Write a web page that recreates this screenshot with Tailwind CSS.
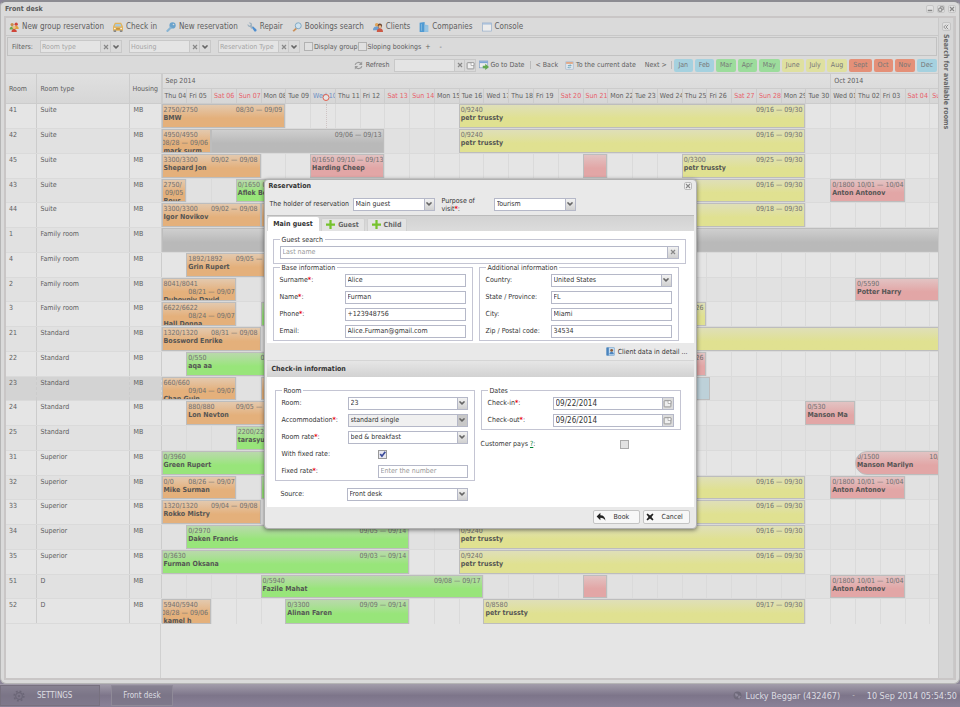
<!DOCTYPE html>
<html lang="en">
<head>
    <meta charset="UTF-8">
    <title>Front desk</title>
    <script src="https://cdn.jsdelivr.net/npm/@tailwindcss/browser@4"></script>
</head>
<body class="relative flex min-h-screen flex-col overflow-x-hidden bg-[#8d8799] font-['DejaVu_Sans_Condensed','DejaVu_Sans',sans-serif] text-[7px] leading-[8px] text-[#606060]">

    <!-- Icon set -->
    <svg class="hidden">
        <symbol id="i-group" viewBox="0 0 16 16"><circle cx="5" cy="4" r="2.6" fill="#c98b4a"/><circle cx="11.5" cy="3.5" r="2.6" fill="#d0453a"/><path d="M1 12c0-4 2-5 4-5s4 1 4 5z" fill="#6aa84f"/><path d="M8 11c0-4 2-5 3.500-5s4 1 4 5z" fill="#e0a23c"/><circle cx="8" cy="8.500" r="2.500" fill="#f0c089"/><path d="M4 16c0-4 2-5 4-5s4.500 1 4.500 5z" fill="#cf4538"/></symbol>
        <symbol id="i-taxi" viewBox="0 0 16 16"><path d="M3 1h10l3 6v7H0V7z" fill="#e3b35a"/><path d="M4 3h8l1.500 4h-11z" fill="#a9c9dc"/><path d="M1 13h4v3H1zM11 13h4v3h-4z" fill="#888"/><path d="M5 10h6v2H5z" fill="#b98a3c"/><circle cx="3" cy="10.500" r="1.200" fill="#fff"/><circle cx="13" cy="10.500" r="1.200" fill="#fff"/></symbol>
        <symbol id="i-key" viewBox="0 0 16 16"><circle cx="10.500" cy="5.500" r="5" fill="#6aa3cc"/><circle cx="12" cy="4" r="1.300" fill="#dcdcdc"/><path d="M7 7l2.500 2.500L3 16H1v-3z" fill="#8ab5d3"/></symbol>
        <symbol id="i-wrench" viewBox="0 0 16 16"><path d="M1 3l3 3 2-2-3-3c3-1 6 1 5 5l2 2-3 3-2-3C3 8 0 6 1 3z" fill="#9fb2c0"/><path d="M8 9l2-2 5 5c1 2-1 4-3 3z" fill="#4f8fd0"/></symbol>
        <symbol id="i-search" viewBox="0 0 16 16"><path d="M6 9l2 2-5 4.500L.8 14z" fill="#c98f58"/><circle cx="10" cy="6" r="4.800" fill="#cfe2ee" stroke="#7ea6c2" stroke-width="1.500"/></symbol>
        <symbol id="i-clients" viewBox="0 0 16 16"><circle cx="6" cy="4.500" r="3" fill="#e2a55a"/><path d="M0 13c0-5 3-6 6-6s5 1 5 6z" fill="#6f9fd0"/><circle cx="11" cy="6" r="3.500" fill="#6b4530"/><circle cx="11" cy="7.500" r="2.300" fill="#efbd8b"/><path d="M6 16c0-4 2-6 5-6s5 2 5 6z" fill="#cc5a46"/></symbol>
        <symbol id="i-company" viewBox="0 0 16 16"><path d="M1 1l8-1v16H1z" fill="#4f9ad2"/><path d="M9 4l6 1v11H9z" fill="#8fc0e2"/><path d="M4 3v11M11 7v7M13 7v7" stroke="#a9cfe9" stroke-width=".8"/></symbol>
        <symbol id="i-window" viewBox="0 0 16 16"><rect x="1" y="1.500" width="14" height="13" fill="#ececec" stroke="#8fa9c9"/><path d="M1 2h14v2H1z" fill="#9db8d9"/></symbol>
        <symbol id="i-refresh" viewBox="0 0 16 16"><path d="M2 7c1-5 8-6 11-2M14 9c-1 5-8 6-11 2" fill="none" stroke="#9a9a9a" stroke-width="2"/><path d="M14.500 1v6h-6zM1.500 15V9h6z" fill="#9a9a9a"/></symbol>
        <symbol id="i-goto" viewBox="0 0 16 16"><rect x="1" y="1.500" width="13" height="11" fill="#ececec" stroke="#7b9dc4"/><path d="M1 2h13v3H1z" fill="#7fa5d4"/><path d="M6 9h4V6l6 5-6 5v-3H6z" fill="#62a94f"/></symbol>
        <symbol id="i-today" viewBox="0 0 16 16"><rect x="1.500" y="1.500" width="13" height="13" fill="#e4e9ef" stroke="#9ab0c8"/><path d="M2 2h12v3H2z" fill="#e0a07a"/><path d="M5 8h6l-2-2M11 11H5l2 2" fill="none" stroke="#5b9ab0" stroke-width="1.300"/></symbol>
        <symbol id="i-cal" viewBox="0 0 16 16"><rect x="2" y="3" width="12" height="11" rx="1" fill="#efefef" stroke="#888" stroke-width="1.500"/><path d="M9 3h5v5H9z" fill="#fff" stroke="#888"/></symbol>
        <symbol id="i-down" viewBox="0 0 8 8"><path d="M1.200 2.200h1.300L4 3.800l1.500-1.600h1.300v1L4 6 1.200 3.200z" fill="#666"/></symbol>
        <symbol id="i-x" viewBox="0 0 8 8"><path d="M2 2l4 4M6 2L2 6" stroke="#888" stroke-width="1.200"/></symbol>
        <symbol id="i-plus" viewBox="0 0 8 8"><path d="M3 0h2v3h3v2H5v3H3V5H0V3h3z" fill="#76c22e"/></symbol>
        <symbol id="i-check" viewBox="0 0 8 8"><path d="M2 3.500l1.500 2L6.500 1.500" fill="none" stroke="#3a4a9a" stroke-width="1.500"/></symbol>
        <symbol id="i-card" viewBox="0 0 16 16"><rect x="1" y="1" width="14" height="14" rx="1" fill="#c5dcf0" stroke="#6a9bc9"/><path d="M1 1h4v14H1z" fill="#4b83bd"/><circle cx="10" cy="6" r="2.500" fill="#8a5a36"/><path d="M6 13c0-3 2-4 4-4s4 1 4 4z" fill="#4b83bd"/></symbol>
        <symbol id="i-back" viewBox="0 0 16 16"><path d="M7 1v4c5 0 8 3 8 9-2-4-4-5-8-5v4L1 7z" fill="#222"/></symbol>
        <symbol id="i-cancel" viewBox="0 0 16 16"><path d="M1 3l2-2 5 4 5-4 2 2-4 5 4 5-2 2-5-4-5 4-2-2 4-5z" fill="#222"/></symbol>
        <symbol id="i-gear" viewBox="0 0 16 16"><circle cx="8" cy="8" r="4.500" fill="none" stroke="#6b6677" stroke-width="1.500"/><circle cx="8" cy="8" r="6.500" fill="none" stroke="#6b6677" stroke-width="2" stroke-dasharray="2.500 2.600"/><circle cx="8" cy="8" r="1.500" fill="#6b6677"/></symbol>
        <symbol id="i-globe" viewBox="0 0 16 16"><circle cx="8" cy="8" r="7" fill="#6f6a7b"/><path d="M3 4l5 1 1 4-4 1zM10 8l4 1-3 5-2-2z" fill="#8f899b"/></symbol>
    </svg>

    <!-- Main window -->
    <main class="flex flex-1 flex-col rounded-md border border-t-2 border-[#b5b5b5] border-t-[#8c8c92] bg-[#dadada] px-[3px] pb-[3px]">
        <header class="flex h-[14px] items-center justify-between pl-px">
            <h1 class="text-[7px] font-bold text-[#5c5c5c]">Front desk</h1>
            <div class="flex gap-[3px]">
                <button aria-label="Minimize" class="flex size-2 items-center justify-center rounded-xs border border-[#c6c6c6] bg-[#e2e2e2]"><svg class="size-[6px] shrink-0" viewBox="0 0 8 8"><path d="M1 6h6" stroke="#888" stroke-width="2"/></svg></button>
                <button aria-label="Restore" class="flex size-2 items-center justify-center rounded-xs border border-[#c6c6c6] bg-[#e2e2e2]"><svg class="size-[6px] shrink-0" viewBox="0 0 8 8"><path d="M3 3V1h4v4H5M1 3h4v4H1z" fill="none" stroke="#888" stroke-width="1.300"/></svg></button>
                <button aria-label="Close" class="flex size-2 items-center justify-center rounded-xs border border-[#c6c6c6] bg-[#e2e2e2]"><svg class="size-2 shrink-0"><use href="#i-x"/></svg></button>
            </div>
        </header>

        <div class="flex flex-1 border-2 border-[#c9c6c6] bg-[#dadada]">
            <div class="flex min-w-0 flex-1 flex-col">
                <!-- Main toolbar -->
                <nav class="flex h-[18px] items-center gap-[9px] border-b border-[#c8c8c8] pt-px pl-[3px] text-[8px] text-[#606060]">
                    <button class="flex items-center gap-[3px]"><svg class="size-[10px]"><use href="#i-group"/></svg>New group reservation</button>
                    <button class="flex items-center gap-[3px]"><svg class="size-[10px]"><use href="#i-taxi"/></svg>Check in</button>
                    <button class="flex items-center gap-[3px]"><svg class="size-[10px]"><use href="#i-key"/></svg>New reservation</button>
                    <button class="flex items-center gap-[3px]"><svg class="size-[10px]"><use href="#i-wrench"/></svg>Repair</button>
                    <button class="flex items-center gap-[3px]"><svg class="size-[10px]"><use href="#i-search"/></svg>Bookings search</button>
                    <button class="flex items-center gap-[3px]"><svg class="size-[10px]"><use href="#i-clients"/></svg>Clients</button>
                    <button class="flex items-center gap-[3px]"><svg class="size-[10px]"><use href="#i-company"/></svg>Companies</button>
                    <button class="flex items-center gap-[3px]"><svg class="size-[10px]"><use href="#i-window"/></svg>Console</button>
                </nav>

                <!-- Filters -->
                <div class="mx-px mt-px flex h-[19px] items-center border border-[#c2c2c2] pl-1">
                    <span class="w-7">Filters:</span>
                    <div class="mr-[7px] flex h-[13px] w-[82px]">
                        <input aria-label="Room type" placeholder="Room type" class="w-[61px] border border-[#c8c8c8] bg-[#e4e4e4] px-px placeholder:text-[#a5a5a5]">
                        <button aria-label="Clear" class="flex w-[10px] items-center justify-center border border-l-0 border-[#c8c8c8]"><svg class="size-2"><use href="#i-x"/></svg></button>
                        <button aria-label="Open" class="flex w-[11px] items-center justify-center border border-l-0 border-[#c8c8c8]"><svg class="size-2"><use href="#i-down"/></svg></button>
                    </div>
                    <div class="mr-[7px] flex h-[13px] w-[82px]">
                        <input aria-label="Housing" placeholder="Housing" class="w-[61px] border border-[#c8c8c8] bg-[#e4e4e4] px-px placeholder:text-[#a5a5a5]">
                        <button aria-label="Clear" class="flex w-[10px] items-center justify-center border border-l-0 border-[#c8c8c8]"><svg class="size-2"><use href="#i-x"/></svg></button>
                        <button aria-label="Open" class="flex w-[11px] items-center justify-center border border-l-0 border-[#c8c8c8]"><svg class="size-2"><use href="#i-down"/></svg></button>
                    </div>
                    <div class="mr-1 flex h-[13px] w-[82px]">
                        <input aria-label="Reservation Type" placeholder="Reservation Type" class="w-[61px] border border-[#c8c8c8] bg-[#e4e4e4] px-px placeholder:text-[#a5a5a5]">
                        <button aria-label="Clear" class="flex w-[10px] items-center justify-center border border-l-0 border-[#c8c8c8]"><svg class="size-2"><use href="#i-x"/></svg></button>
                        <button aria-label="Open" class="flex w-[11px] items-center justify-center border border-l-0 border-[#c8c8c8]"><svg class="size-2"><use href="#i-down"/></svg></button>
                    </div>
                    <label class="flex items-center gap-px whitespace-nowrap"><input type="checkbox" class="size-[9px] shrink-0 appearance-none border border-[#b2b2b2] bg-[#e0e0e0]">Display group</label>
                    <label class="flex items-center gap-px whitespace-nowrap"><input type="checkbox" class="size-[9px] shrink-0 appearance-none border border-[#b2b2b2] bg-[#e0e0e0]">Sloping bookings</label>
                    <button class="ml-1">+</button>
                    <button class="ml-[9px]">-</button>
                </div>

                <!-- Date navigation -->
                <div class="flex h-[17px] items-center justify-end pt-px pr-px">
                    <button class="mr-[5px] flex items-center gap-[3px]"><svg class="size-[9px]"><use href="#i-refresh"/></svg>Refresh</button>
                    <div class="mr-[3px] flex h-[13px]">
                        <input aria-label="Date" class="w-[61px] border border-[#c8c8c8] bg-[#e4e4e4] px-px">
                        <button aria-label="Clear" class="flex w-[10px] items-center justify-center border border-l-0 border-[#c8c8c8]"><svg class="size-2"><use href="#i-x"/></svg></button>
                        <button aria-label="Pick date" class="flex w-[11px] items-center justify-center border border-l-0 border-[#c8c8c8]"><svg class="size-[9px]"><use href="#i-cal"/></svg></button>
                    </div>
                    <button class="flex items-center gap-px"><svg class="size-[10px]"><use href="#i-goto"/></svg>Go to Date</button>
                    <span class="mx-[5px] h-2 border-l border-[#bbb]"></span>
                    <button class="mr-[7px]">&lt; Back</button>
                    <button class="mr-[9px] flex items-center gap-[2px]"><svg class="size-[9px]"><use href="#i-today"/></svg>To the current date</button>
                    <button>Next &gt;</button>
                    <span class="mr-[2px] ml-1 h-2 border-l border-[#bbb]"></span>
                    <div id="months" class="flex gap-[2px]"></div>
                </div>

                <!-- Booking grid -->
                <table class="w-full table-fixed border-collapse">
                    <thead class="bg-linear-to-b from-[#e0e0e0] to-[#d6d6d6]">
                        <tr class="h-[29px]">
                            <th class="w-[30px] border border-l-0 border-[#cccccc] pl-[3px] text-left font-normal">Room</th>
                            <th class="w-[93px] border border-[#cccccc] pl-1 text-left font-normal">Room type</th>
                            <th class="w-8 border border-[#cccccc] pl-[3px] text-left font-normal">Housing</th>
                            <th class="relative overflow-hidden border border-r-0 border-[#cccccc] p-0 font-normal">
                                <div id="monthRow" class="relative h-[15px] border-b border-[#cccccc]"></div>
                                <div id="dayRow" class="relative h-[14px]"></div>
                            </th>
                        </tr>
                    </thead>
                    <tbody id="rooms"></tbody>
                </table>
                <div class="flex flex-1 bg-[#e5e5e5]"><div class="w-[155px] border-r border-[#d0d0d0]"></div></div>
            </div>

            <!-- Collapsed side panel -->
            <aside class="flex w-4 flex-col items-center border-x border-[#c9c9c9] bg-[#d6d6d6] pt-1">
                <button aria-label="Expand" class="mb-[3px] flex size-[9px] items-center justify-center rounded-xs border border-[#c4c4c4] bg-[#e0e0e0]"><svg class="size-[6px]" viewBox="0 0 8 8"><path d="M4 1L1 4l3 3M7 1L4 4l3 3" fill="none" stroke="#777"/></svg></button>
                <span class="text-[7px] font-bold whitespace-nowrap text-[#666] [writing-mode:vertical-rl]">Search for available rooms</span>
            </aside>
        </div>
    </main>

    <!-- Taskbar -->
    <footer class="flex h-[23px] items-center bg-linear-to-b from-[#a39dab] via-[#7d758a] to-[#8a8298] text-[8px] text-[#dddde2]">
        <button class="flex h-[21px] w-[100px] items-center gap-3 border border-[#77717f] bg-[#7a7585]/60 pl-3"><svg class="size-3"><use href="#i-gear"/></svg>SETTINGS</button>
        <button class="ml-[11px] h-[21px] w-[62px] border border-[#8f8a98] bg-[#7a7585]/60">Front desk</button>
        <span class="ml-auto flex items-center gap-1 text-[9px]"><svg class="size-[9px]"><use href="#i-globe"/></svg>Lucky Beggar (432467)</span>
        <span class="mx-[12px] text-[#bbb]">-</span>
        <time class="pr-[3px] text-[9px]">10 Sep 2014 05:54:50</time>
    </footer>

    <!-- Reservation dialog -->
    <div class="absolute inset-0 flex items-center justify-center">
        <form role="dialog" aria-labelledby="dlgTitle" class="flex w-[433px] flex-col rounded-sm border border-[#b0b0b0] bg-[#e9e9e9] px-[2px] text-[7px] text-[#333] shadow-[0_1px_4px_rgba(0,0,0,0.5)]">
            <div class="flex h-3 items-center justify-between px-[2px]">
                <h2 id="dlgTitle" class="font-bold">Reservation</h2>
                <button type="button" aria-label="Close" class="flex size-2 items-center justify-center rounded-xs border border-[#bbb] bg-[#f4f4f4]"><svg class="size-2 shrink-0"><use href="#i-x"/></svg></button>
            </div>
            <div class="flex h-[23px] items-center pt-[2px] pl-[3px]">
                <label for="holder" class="w-[83px] whitespace-nowrap">The holder of reservation</label>
                <div class="relative h-[13px] w-[82px]">
                    <select id="holder" class="block h-full w-full appearance-none border border-[#b5b8c8] bg-white pl-[2px]"><option>Main guest</option></select>
                    <span class="pointer-events-none absolute inset-y-0 right-0 flex w-[11px] items-center justify-center border border-[#b5b8c8] bg-linear-to-b from-[#f2f2f2] to-[#d0d0d0]"><svg class="size-2"><use href="#i-down"/></svg></span>
                </div>
                <label for="purpose" class="ml-[7px] w-[52px] pt-px">Purpose of<br>visit<b class="text-red-600">*</b>:</label>
                <div class="relative h-[13px] w-[82px]">
                    <select id="purpose" class="block h-full w-full appearance-none border border-[#b5b8c8] bg-white pl-[2px]"><option>Tourism</option></select>
                    <span class="pointer-events-none absolute inset-y-0 right-0 flex w-[11px] items-center justify-center border border-[#b5b8c8] bg-linear-to-b from-[#f2f2f2] to-[#d0d0d0]"><svg class="size-2"><use href="#i-down"/></svg></span>
                </div>
            </div>

            <div class="flex h-4 items-end gap-[2px] border-t border-[#bbb] bg-linear-to-b from-[#d2d2d2] to-[#dcdcdc] pl-px font-bold">
                <button type="button" class="h-[14px] w-[51px] rounded-t-xs bg-white">Main guest</button>
                <button type="button" class="flex h-[13px] w-11 items-center justify-center gap-[3px] rounded-t-xs border border-b-0 border-[#d0d0d0] bg-[#e3e3e3] text-[#666]"><svg class="size-[9px]"><use href="#i-plus"/></svg>Guest</button>
                <button type="button" class="flex h-[13px] w-10 items-center justify-center gap-[3px] rounded-t-xs border border-b-0 border-[#d0d0d0] bg-[#e3e3e3] text-[#666]"><svg class="size-[9px]"><use href="#i-plus"/></svg>Child</button>
            </div>

            <div class="bg-white px-[6px] pt-[5px] pb-[2px]">
                <fieldset class="mr-[2px] border border-[#c4c5d3] px-[6px] pt-[2px] pb-1">
                    <legend class="px-[2px]">Guest search</legend>
                    <div class="flex h-[13px]">
                        <input aria-label="Guest search" placeholder="Last name" class="min-w-0 flex-1 border border-[#b5b8c8] px-[2px] placeholder:text-[#999]">
                        <button type="button" aria-label="Clear" class="flex w-[11px] items-center justify-center border border-l-0 border-[#b5b8c8] bg-linear-to-b from-[#f2f2f2] to-[#d0d0d0]"><svg class="size-2"><use href="#i-x"/></svg></button>
                    </div>
                </fieldset>
                <div class="flex gap-[6px]">
                    <fieldset class="grid w-[200px] grid-cols-[65px_1fr] items-center gap-y-1 border border-[#c4c5d3] px-[6px] pt-[2px] pb-[2px]">
                        <legend class="px-[2px]">Base information</legend>
                        <label for="surname">Surname<b class="text-red-600">*</b>:</label>
                        <input id="surname" value="Alice" class="h-[13px] min-w-0 border border-[#b5b8c8] px-[2px]">
                        <label for="name">Name<b class="text-red-600">*</b>:</label>
                        <input id="name" value="Furman" class="h-[13px] min-w-0 border border-[#b5b8c8] px-[2px]">
                        <label for="phone">Phone<b class="text-red-600">*</b>:</label>
                        <input id="phone" value="+123948756" class="h-[13px] min-w-0 border border-[#b5b8c8] px-[2px]">
                        <label for="email">Email:</label>
                        <input id="email" value="Alice.Furman@gmail.com" class="h-[13px] min-w-0 border border-[#b5b8c8] px-[2px]">
                    </fieldset>
                    <fieldset class="grid w-[200px] grid-cols-[65px_1fr] items-center gap-y-1 border border-[#c4c5d3] px-[6px] pt-[2px] pb-[2px]">
                        <legend class="px-[2px]">Additional information</legend>
                        <label for="country">Country:</label>
                        <div class="relative h-[13px]">
                            <select id="country" class="block h-full w-full appearance-none border border-[#b5b8c8] bg-white pl-[2px]"><option>United States</option></select>
                            <span class="pointer-events-none absolute inset-y-0 right-0 flex w-[11px] items-center justify-center border border-[#b5b8c8] bg-linear-to-b from-[#f2f2f2] to-[#d0d0d0]"><svg class="size-2"><use href="#i-down"/></svg></span>
                        </div>
                        <label for="state">State / Province:</label>
                        <input id="state" value="FL" class="h-[13px] min-w-0 border border-[#b5b8c8] px-[2px]">
                        <label for="city">City:</label>
                        <input id="city" value="Miami" class="h-[13px] min-w-0 border border-[#b5b8c8] px-[2px]">
                        <label for="zip" class="whitespace-nowrap">Zip / Postal code:</label>
                        <input id="zip" value="34534" class="h-[13px] min-w-0 border border-[#b5b8c8] px-[2px]">
                    </fieldset>
                </div>
            </div>

            <div class="flex h-[18px] items-center justify-end border-b border-[#d5d5d5] pt-px pr-[6px]">
                <button type="button" class="flex items-center gap-[3px]"><svg class="size-[9px]"><use href="#i-card"/></svg>Client data in detail ...</button>
            </div>
            <h3 class="flex h-4 items-center bg-linear-to-b from-[#e6e6e6] to-[#d2d2d2] pl-[5px] font-bold">Check-in information</h3>

            <div class="flex h-[130px] gap-[6px] bg-white px-2 pt-[10px]">
                <div>
                    <fieldset class="grid w-[200px] grid-cols-[66px_1fr] items-center gap-y-1 border border-[#c4c5d3] px-[6px] pt-[2px] pb-[2px]">
                        <legend class="px-[2px]">Room</legend>
                        <label for="room">Room:</label>
                        <div class="relative h-[13px]">
                            <select id="room" class="block h-full w-full appearance-none border border-[#b5b8c8] bg-white pl-[2px]"><option>23</option></select>
                            <span class="pointer-events-none absolute inset-y-0 right-0 flex w-[11px] items-center justify-center border border-[#b5b8c8] bg-linear-to-b from-[#f2f2f2] to-[#d0d0d0]"><svg class="size-2"><use href="#i-down"/></svg></span>
                        </div>
                        <label for="accommodation" class="whitespace-nowrap">Accommodation<b class="text-red-600">*</b>:</label>
                        <div class="relative h-[13px]">
                            <select id="accommodation" class="block h-full w-full appearance-none border border-[#b5b8c8] bg-[#f0f0f0] pl-[2px]"><option>standard single</option></select>
                            <span class="pointer-events-none absolute inset-y-0 right-0 flex w-[11px] items-center justify-center border border-[#b5b8c8] bg-[#c8c8c8]"><svg class="size-2"><use href="#i-down"/></svg></span>
                        </div>
                        <label for="rate">Room rate<b class="text-red-600">*</b>:</label>
                        <div class="relative h-[13px]">
                            <select id="rate" class="block h-full w-full appearance-none border border-[#b5b8c8] bg-white pl-[2px]"><option>bed &amp; breakfast</option></select>
                            <span class="pointer-events-none absolute inset-y-0 right-0 flex w-[11px] items-center justify-center border border-[#b5b8c8] bg-linear-to-b from-[#f2f2f2] to-[#d0d0d0]"><svg class="size-2"><use href="#i-down"/></svg></span>
                        </div>
                        <label for="fixed">With fixed rate:</label>
                        <div class="grid h-[13px] items-center pl-[30px]">
                            <input id="fixed" type="checkbox" checked class="peer col-start-1 row-start-1 size-[9px] appearance-none border border-[#999] bg-[#e8e8f0]">
                            <svg class="pointer-events-none invisible col-start-1 row-start-1 size-[9px] peer-checked:visible"><use href="#i-check"/></svg>
                        </div>
                        <label for="fixedRate">Fixed rate<b class="text-red-600">*</b>:</label>
                        <input id="fixedRate" placeholder="Enter the number" class="ml-[30px] h-[13px] min-w-0 border border-[#b5b8c8] px-[2px] placeholder:text-[#999]">
                    </fieldset>
                    <div class="mt-[7px] grid w-[193px] grid-cols-[66px_1fr] items-center pl-[6px]">
                        <label for="source">Source:</label>
                        <div class="relative h-[13px]">
                            <select id="source" class="block h-full w-full appearance-none border border-[#b5b8c8] bg-white pl-[2px]"><option>Front desk</option></select>
                            <span class="pointer-events-none absolute inset-y-0 right-0 flex w-[11px] items-center justify-center border border-[#b5b8c8] bg-linear-to-b from-[#f2f2f2] to-[#d0d0d0]"><svg class="size-2"><use href="#i-down"/></svg></span>
                        </div>
                    </div>
                </div>
                <div>
                    <fieldset class="grid w-[200px] grid-cols-[65px_1fr] items-center gap-y-1 border border-[#c4c5d3] px-[6px] pt-[2px] pb-[2px]">
                        <legend class="px-[2px]">Dates</legend>
                        <label for="checkin">Check-in<b class="text-red-600">*</b>:</label>
                        <div class="flex h-[13px]">
                            <input id="checkin" value="09/22/2014" class="min-w-0 flex-1 border border-[#b5b8c8] px-[2px] text-[8px]">
                            <button type="button" aria-label="Pick date" class="flex w-[11px] items-center justify-center border border-l-0 border-[#b5b8c8] bg-[#dcdcdc]"><svg class="size-[9px]"><use href="#i-cal"/></svg></button>
                        </div>
                        <label for="checkout">Check-out<b class="text-red-600">*</b>:</label>
                        <div class="flex h-[13px]">
                            <input id="checkout" value="09/26/2014" class="min-w-0 flex-1 border border-[#b5b8c8] px-[2px] text-[8px]">
                            <button type="button" aria-label="Pick date" class="flex w-[11px] items-center justify-center border border-l-0 border-[#b5b8c8] bg-[#dcdcdc]"><svg class="size-[9px]"><use href="#i-cal"/></svg></button>
                        </div>
                    </fieldset>
                    <div class="mt-[10px] flex w-[148px] items-center justify-between">
                        <label for="pays">Customer pays <a href="#" class="text-green-700 underline">?</a>:</label>
                        <input id="pays" type="checkbox" class="size-[9px] appearance-none border border-[#aaa] bg-[#e2e2e2]">
                    </div>
                </div>
            </div>

            <div class="flex h-[21px] items-center justify-end gap-[3px] pr-1">
                <button type="button" class="flex h-[14px] w-[47px] items-center gap-2 rounded-xs border border-[#c4c4c4] bg-[#f7f7f7] pl-[2px]"><svg class="size-[10px]"><use href="#i-back"/></svg>Book</button>
                <button type="button" class="flex h-[14px] w-[47px] items-center gap-2 rounded-xs border border-[#c4c4c4] bg-[#f7f7f7] pl-[2px]"><svg class="size-2"><use href="#i-cancel"/></svg>Cancel</button>
            </div>
        </form>
    </div>

    <script>
        // Number of days that fit in the visible timeline
        const DAYS = 31.35;
        const pct = d => (d / DAYS * 100) + '%';

        const colors = {
            o: 'bg-linear-to-b from-[#e3c9ae] to-[#e4b07b] to-60%',
            g: 'bg-linear-to-b from-[#b9d9ab] to-[#98e57a] to-60%',
            y: 'bg-linear-to-b from-[#dfdfb8] to-[#e0e191] to-60%',
            r: 'bg-linear-to-b from-[#e2c3c3] to-[#e2a6a6] to-60%',
            n: 'bg-linear-to-b from-[#cfcfcf] to-[#b9b9b9] to-60%',
            b: 'bg-[#bdd1d9]'
        };

        // [color, start, end, amount, dates, name]
        const petr = ['y', 12, 26, '0/9240', '09/16 — 09/30', 'petr trussty'];
        const anton = ['r', 27, 30, '0/1800', '10/01 — 10/04', 'Anton Antonov'];
        const rooms = [
            ['41', 'Suite', [['o', 0, 5, '2750/2750', '08/30 — 09/09', 'BMW'], petr]],
            ['42', 'Suite', [['o', 0, 2, '4950/4950', '08/28 — 09/06', 'mark surm'], ['n', 2, 9, '', '09/06 — 09/13', ''], petr]],
            ['45', 'Suite', [['o', 0, 4, '3300/3300', '09/02 — 09/08', 'Shepard Jon'], ['r', 6, 9, '0/1650', '09/10 — 09/13', 'Harding Cheep'], ['r', 17, 18, '', '', ''], ['y', 21, 26, '0/3300', '09/25 — 09/30', 'petr trussty']]],
            ['43', 'Suite', [['o', 0, 1, '2750/', '09/05', 'Rous'], ['g', 3, 6, '0/1650', '09/07 — 09/10', 'Aflek Ben'], petr, anton]],
            ['44', 'Suite', [['o', 0, 4, '3300/3300', '09/02 — 09/08', 'Igor Novikov'], ['o', 4, 6, '', '', ''], ['y', 14, 26, '', '09/18 — 09/30', '']]],
            ['1', 'Family room', [['n', 0, 31.4, '', '', '']]],
            ['4', 'Family room', [['o', 1, 5, '1892/1892', '09/05 — 09/09', 'Grin Rupert']]],
            ['2', 'Family room', [['o', 0, 3, '8041/8041', '08/21 — 09/07', 'Duhovniy David'], ['r', 28, 32, '0/5590', '', 'Potter Harry']]],
            ['3', 'Family room', [['o', 0, 3, '6622/6622', '08/24 — 09/07', 'Hall Donna'], ['g', 4, 8, '', '', ''], ['y', 18, 22, '', '09/22 — 09/26', '']]],
            ['21', 'Standard', [['o', 0, 4, '1320/1320', '08/31 — 09/08', 'Bossword Enrike'], ['y', 12, 32, '', '', '']]],
            ['22', 'Standard', [['g', 1, 6, '0/550', '09/05 — 09/10', 'aqa aa'], ['r', 18, 22, '', '09/22 — 09/26', '']]],
            ['23', 'Standard', [['o', 0, 3, '660/660', '09/04 — 09/07', 'Chan Guin'], ['o', 4, 6, '', '', ''], ['b', 18, 22.15, '', '', '']]],
            ['24', 'Standard', [['o', 1, 5, '880/880', '09/05 — 09/09', 'Lon Nevton'], ['r', 26, 28, '0/530', '', 'Manson Ma']]],
            ['25', 'Standard', [['g', 3, 6, '2200/2200', '', 'tarasyuk']]],
            ['31', 'Superior', [['g', 0, 8, '0/3960', '', 'Green Rupert'], ['r', 28, 33, '0/1500', '10/02 — 10/07', 'Manson Marilyn']]],
            ['32', 'Superior', [['o', 0, 3, '0/0', '08/26 — 09/07', 'Mike Surman'], ['g', 4, 8, '', '', ''], petr, anton]],
            ['33', 'Superior', [['o', 0, 4, '1320/1320', '09/04 — 09/08', 'Rokko Mistry'], petr]],
            ['34', 'Superior', [['g', 1, 10, '0/2970', '09/05 — 09/14', 'Daken Francis'], petr]],
            ['35', 'Superior', [['g', 0, 10, '0/3630', '09/03 — 09/14', 'Furman Oksana'], petr]],
            ['51', 'D', [['g', 4, 13, '0/5940', '09/08 — 09/17', 'Fazile Mahat'], ['r', 17, 18, '', '', ''], anton]],
            ['52', 'D', [['o', 0, 2, '5940/5940', '08/28 — 09/06', 'kamel h'], ['g', 5, 10, '0/3300', '09/09 — 09/14', 'Alinan Faren'], ['y', 13, 26, '0/8580', '09/17 — 09/30', 'petr trussty']]]
        ];

        // Three-day bars have just enough room for amount and dates on one line
        const bar = ([c, s, e, amount, dates, name]) => `
            <div class="absolute inset-y-0 flex flex-wrap content-start justify-end overflow-hidden border border-[#bdbdbd] pt-px pl-px whitespace-nowrap text-[#707070] ${colors[c]} ${name === 'Manson Marilyn' ? 'rounded-l-full' : ''}" style="left:${pct(s)};width:${pct(e - s)}">
                <span class="mr-auto">${amount}</span><span class="${e - s === 3 ? '' : 'pr-[2px]'}">${dates}</span>
                <b class="w-full text-[#555]">${name}</b>
            </div>`;

        let lines = '';
        for (let d = 1; d < DAYS; d++) {
            lines += `<i class="absolute inset-y-0 border-l border-[#dadada]" style="left:${pct(d)}"></i>`;
        }
        lines += `<i class="absolute inset-y-0 border-l border-dotted border-[#cfc4c4]" style="left:${pct(6.65)}"></i>`;

        // Rooms
        document.getElementById('rooms').innerHTML = rooms.map(([no, type, bars], i) => {
            const active = no === '23';
            const cell = active ? 'border border-y-[#aaa] border-x-[#cccccc] border-dashed bg-[#d3d3d3]' : 'border border-y-[#dadada] border-x-[#cccccc]';
            return `
            <tr class="align-top ${i % 4 === 3 ? 'h-6' : 'h-[25px]'} ${i % 2 ? 'bg-[#e1e1e1]' : 'bg-[#e5e5e5]'}">
                <td class="border-l-0! pt-[2px] pl-[3px] ${cell}">${no}</td>
                <td class="pt-[2px] pl-1 ${cell}">${type}</td>
                <td class="pt-[2px] pl-1 ${cell}">MB</td>
                <td class="relative overflow-hidden border-t border-[#dadada] p-0">${lines}${bars.map(bar).join('')}</td>
            </tr>`;
        }).join('');

        // Header days, starting Thu 4 September 2014
        const week = ['Sun', 'Mon', 'Tue', 'Wed', 'Thu', 'Fri', 'Sat'];
        let days = '';
        for (let d = 0; d < DAYS; d++) {
            const date = new Date(2014, 8, 4 + d);
            const wd = date.getDay();
            const color = wd === 0 || wd === 6 ? 'text-[#e8606a]' : (d === 6 ? 'text-[#6b8fc4]' : '');
            days += `<span class="absolute inset-y-0 overflow-hidden border-l border-[#cccccc] pt-[3px] pl-[2px] text-left whitespace-nowrap ${color}" style="left:${pct(d)};width:${pct(1)}">${week[wd]} ${String(date.getDate()).padStart(2, '0')}</span>`;
        }
        days += `<i class="absolute top-[5px] size-[7px] -translate-x-1/2 rounded-full border border-[#e0604f] bg-[#e4e4e4]" style="left:${pct(6.65)}"></i>`;
        document.getElementById('dayRow').innerHTML = days;
        document.getElementById('monthRow').innerHTML = [[0, 'Sep 2014'], [27, 'Oct 2014']].map(([d, t]) =>
            `<span class="absolute inset-y-0 border-l border-[#cccccc] pt-[3px] pl-[3px]" style="left:${pct(d)}">${t}</span>`).join('');

        // Month buttons
        const blue = 'bg-[#a5d1df]', green = 'bg-[#9cdc9c]', yellow = 'bg-[#dfe0a0]', red = 'bg-[#e49078]';
        document.getElementById('months').innerHTML = [
            ['Jan', blue], ['Feb', blue], ['Mar', green], ['Apr', green], ['May', green], ['June', yellow],
            ['July', yellow], ['Aug', yellow], ['Sept', red], ['Oct', red], ['Nov', red], ['Dec', blue]
        ].map(([m, c]) => `<button class="h-[13px] min-w-[19px] rounded-xs px-1 text-[#777] ${c}">${m}</button>`).join('');
    </script>
</body>
</html>
